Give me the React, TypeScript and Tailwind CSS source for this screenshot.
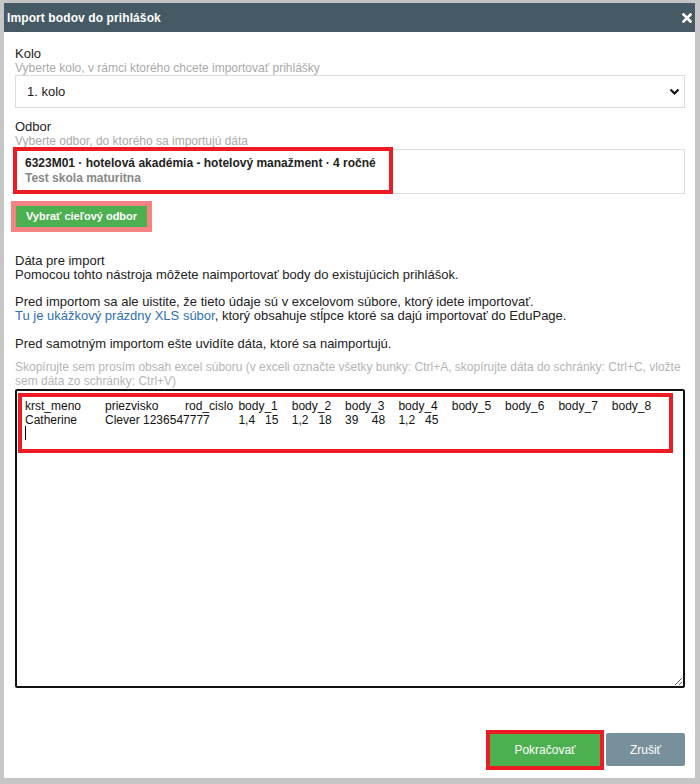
import React from "react";

const row1 = "krst_meno\tpriezvisko\trod_cislo\tbody_1\tbody_2\tbody_3\tbody_4\tbody_5\tbody_6\tbody_7\tbody_8";
const row2 = "Catherine\tClever 1236547777\t\t1,4\t15\t1,2\t18\t39\t48\t1,2\t45";

export default function App() {
  return (
    <div className="w-[700px] h-[784px] bg-[#c6c6c6] pl-[4px] pt-[3px] font-['Liberation_Sans',Arial,sans-serif] text-[#333]">
      <div className="w-[691px] h-[775px] bg-white flex flex-col">
        {/* header */}
        <div className="h-[29px] bg-[#465a65] flex items-center justify-between pl-[3px] pr-[3px] text-white">
          <span className="text-[12px] font-bold tracking-[0.1px]">Import bodov do prihlášok</span>
          <svg width="10" height="10" viewBox="0 0 10 10">
            <path d="M1.5 1.5 L8.5 8.5 M8.5 1.5 L1.5 8.5" stroke="white" strokeWidth="2.6" strokeLinecap="square" />
          </svg>
        </div>

        {/* body */}
        <div className="flex-1 flex flex-col pl-[11px] pr-[10px] pt-[15px]">
          <div className="text-[13px] leading-[14px] text-[#222]">Kolo</div>
          <div className="text-[12px] leading-[14px] text-[#aaa]">Vyberte kolo, v rámci ktorého chcete importovať prihlášky</div>
          <div className="h-[33px] border border-[#ddd] flex items-center justify-between pl-[11px] pr-[4px] text-[13px] text-[#222]">
            <span>1. kolo</span>
            <svg width="11" height="8" viewBox="0 0 11 8">
              <path d="M1.5 1.5 L5.5 5.5 L9.5 1.5" stroke="#111" strokeWidth="2.2" fill="none" />
            </svg>
          </div>

          <div className="mt-[12px] text-[13px] leading-[14px] text-[#222]">Odbor</div>
          <div className="text-[12px] leading-[14px] text-[#aaa]">Vyberte odbor, do ktorého sa importujú dáta</div>
          <div className="relative mt-[1px] h-[45px] border border-[#ddd] pl-[9px] pt-[6px]">
            <div className="text-[12px] leading-[15px] font-bold text-[#222]">6323M01 · hotelová akadémia - hotelový manažment · 4 ročné</div>
            <div className="text-[12px] leading-[15px] font-bold text-[#888]">Test skola maturitna</div>
            <div className="absolute left-[-3px] top-[-3px] w-[380px] h-[47px] border-[4px] border-[#ed1c24]" />
          </div>

          <div className="mt-[7px] self-start p-[5px] bg-[#f58383] ml-[-4px]">
            <button className="h-[21px] w-[131px] bg-[#4caf50] text-white text-[11px] font-bold flex items-center justify-center">
              Vybrať cieľový odbor
            </button>
          </div>

          <div className="mt-[22px] text-[13px] leading-[14px] text-[#222]">Dáta pre import</div>
          <div className="text-[13px] leading-[14px] text-[#222]">Pomocou tohto nástroja môžete naimportovať body do existujúcich prihlášok.</div>
          <div className="mt-[13px] text-[13px] leading-[14px] text-[#222]">Pred importom sa ale uistite, že tieto údaje sú v excelovom súbore, ktorý idete importovať.</div>
          <div className="text-[13px] leading-[14px] text-[#222]">
            <span className="text-[#2f6fb3]">Tu je ukážkový prázdny XLS súbor</span>, ktorý obsahuje stĺpce ktoré sa dajú importovať do EduPage.
          </div>
          <div className="mt-[14px] text-[13px] leading-[14px] text-[#222]">Pred samotným importom ešte uvidíte dáta, ktoré sa naimportujú.</div>
          <div className="mt-[9px] text-[12px] leading-[14px] text-[#b5b5b5]">
            Skopírujte sem prosím obsah excel súboru (v exceli označte všetky bunky: Ctrl+A, skopírujte dáta do schránky: Ctrl+C, vložte sem dáta zo schránky: Ctrl+V)
          </div>

          <div className="relative mt-[1px] h-[299px]">
            <textarea
              readOnly
              value={row1 + "\n" + row2 + "\n"}
              className="w-full h-full border-2 border-[#111] rounded-[2px] pl-[8px] pt-[9px] text-[12px] leading-[13.5px] text-[#111] [tab-size:8] outline-none font-['Liberation_Sans',Arial,sans-serif]"
            />
            <div className="absolute left-[10px] top-[37px] w-[1px] h-[14px] bg-black" />
            <div className="absolute left-[3px] top-[4px] w-[655px] h-[60px] border-[4px] border-[#ed1c24] pointer-events-none" />
          </div>

          <div className="mt-[45px] mb-[11px] flex justify-end gap-[5px]">
            <div className="relative">
              <button className="h-[33px] w-[112px] bg-[#4caf50] rounded-[2px] text-white text-[12px] flex items-center justify-center">
                Pokračovať
              </button>
              <div className="absolute left-[-3px] top-[-3px] w-[118px] h-[40px] border-[4px] border-[#ed1c24]" />
            </div>
            <button className="h-[33px] w-[79px] bg-[#78909c] rounded-[2px] text-white text-[12px] flex items-center justify-center">
              Zrušiť
            </button>
          </div>
        </div>
      </div>
    </div>
  );
}
